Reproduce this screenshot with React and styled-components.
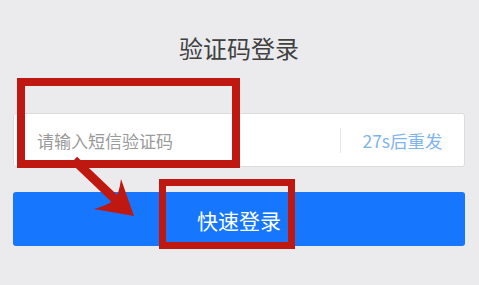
import React from "react"
import styled, { createGlobalStyle } from "styled-components"

const Global = createGlobalStyle`
  html, body {
    margin: 0;
    padding: 0;
    background: #ebebee;
    font-family: "Noto Sans CJK SC", "Noto Sans", sans-serif;
  }
`

const Page = styled.div`
  position: relative;
  width: 479px;
  height: 285px;
  padding: 33px 14px 0 13px;
  box-sizing: border-box;
  overflow: hidden;
`

const Title = styled.h1`
  margin: 0 0 50px;
  font-size: 24px;
  line-height: 30px;
  font-weight: 400;
  color: #404040;
  text-align: center;
`

const Field = styled.div`
  display: flex;
  align-items: center;
  height: 54px;
  box-sizing: border-box;
  background: #fff;
  border: 1px solid #dcdcdf;
  border-radius: 3px;
`

const Input = styled.input`
  flex: 1;
  min-width: 0;
  border: none;
  outline: none;
  background: transparent;
  padding: 0 0 0 23px;
  font-family: inherit;
  font-size: 17px;
  color: #333;
  &::placeholder {
    color: #9a9a9a;
  }
`

const Resend = styled.span`
  width: 123px;
  border-left: 1px solid #e6e6e8;
  line-height: 25px;
  text-align: center;
  font-size: 17.5px;
  color: #80b4ee;
`

const Button = styled.button`
  display: block;
  width: 100%;
  height: 54px;
  margin-top: 25px;
  border: none;
  border-radius: 3px;
  background: #1676fd;
  color: #fff;
  font-family: inherit;
  font-size: 21px;
  padding-top: 2px;
`

const Mark = styled.div`
  position: absolute;
  left: ${(p) => p.x}px;
  top: ${(p) => p.y}px;
  width: ${(p) => p.w}px;
  height: ${(p) => p.h}px;
  box-sizing: border-box;
  border: ${(p) => p.b}px solid #bf1811;
  pointer-events: none;
`

const Arrow = styled.svg`
  position: absolute;
  left: 0;
  top: 0;
  pointer-events: none;
`

export default function App() {
  return (
    <>
      <Global />
      <Page>
        <Title>验证码登录</Title>
        <Field>
          <Input placeholder="请输入短信验证码" />
          <Resend>27s后重发</Resend>
        </Field>
        <Button>快速登录</Button>

        <Mark x={17} y={78} w={223} h={90} b={8} />
        <Mark x={159} y={179} w={136} h={70} b={7} />
        <Arrow width="479" height="285" viewBox="0 0 479 285">
          <line x1="74" y1="160" x2="117" y2="201" stroke="#bf1811" strokeWidth="9" />
          <path
            d="M134 216 L121 179 Q119 195 114 200 Q106 206 94 209 Z"
            fill="#bf1811"
          />
        </Arrow>
      </Page>
    </>
  )
}
